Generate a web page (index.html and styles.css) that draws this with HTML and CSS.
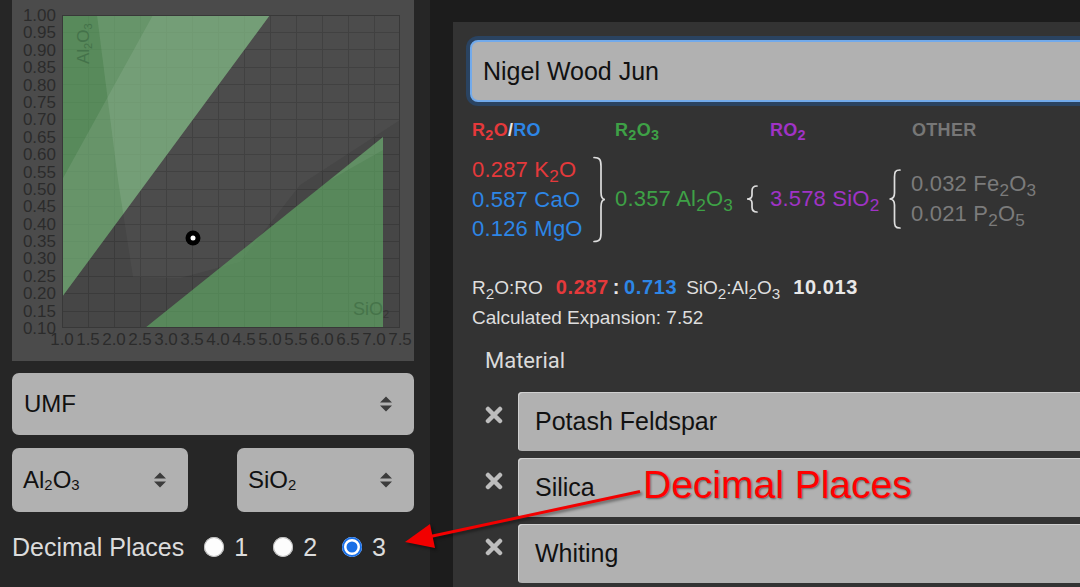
FILE: index.html
```html
<!DOCTYPE html>
<html>
<head>
<meta charset="utf-8">
<link rel="stylesheet" href="styles.css">
</head>
<body>
<div class="app">
  <aside class="left">
    <div class="chart">
      <svg class="plot" width="402" height="361" viewBox="12 0 402 361">
        <rect x="62" y="15" width="338" height="313" fill="#464646"/>
        <path class="grid" d="M88.5 15V328M114.5 15V328M140.5 15V328M166.5 15V328M192.5 15V328M218.5 15V328M244.5 15V328M270.5 15V328M296.5 15V328M322.5 15V328M348.5 15V328M374.5 15V328M62 32.5H400M62 49.5H400M62 67.5H400M62 84.5H400M62 102.5H400M62 119.5H400M62 137.5H400M62 154.5H400M62 171.5H400M62 189.5H400M62 206.5H400M62 224.5H400M62 241.5H400M62 258.5H400M62 276.5H400M62 293.5H400M62 311.5H400"/>
        <polygon points="97,15 400,15 400,120 300,185 240,262 180,278 133,277 118,180" fill="rgba(255,255,255,0.035)"/>
        <polygon points="62,15 270,15 62,297" fill="rgba(100,180,105,0.62)"/>
        <polygon points="97,15 270,15 123.3,213.9 118,180" fill="rgba(255,255,255,0.08)"/>
        <polygon points="153,15 270,15 62,297 62,180" fill="rgba(255,255,255,0.09)"/>
        <polygon points="145,328 383,137 383,328" fill="rgba(100,180,105,0.6)"/>
        <polygon points="330,180 383,137 383,150" fill="rgba(255,255,255,0.06)"/>
        <rect x="62.5" y="15.5" width="337" height="312" fill="none" stroke="#383838"/>
        <text class="axis-name" transform="translate(89,64) rotate(-90)">Al<tspan class="tsub" dy="3">2</tspan><tspan dy="-3">O</tspan><tspan class="tsub" dy="3">3</tspan></text>
        <text class="axis-name si" x="353" y="315">SiO<tspan class="tsub dark" dy="3">2</tspan></text>
        <g class="ylab">
          <text x="56" y="21">1.00</text>
          <text x="56" y="38.4">0.95</text>
          <text x="56" y="55.8">0.90</text>
          <text x="56" y="73.2">0.85</text>
          <text x="56" y="90.6">0.80</text>
          <text x="56" y="107.9">0.75</text>
          <text x="56" y="125.3">0.70</text>
          <text x="56" y="142.7">0.65</text>
          <text x="56" y="160.1">0.60</text>
          <text x="56" y="177.5">0.55</text>
          <text x="56" y="194.9">0.50</text>
          <text x="56" y="212.3">0.45</text>
          <text x="56" y="229.7">0.40</text>
          <text x="56" y="247.1">0.35</text>
          <text x="56" y="264.4">0.30</text>
          <text x="56" y="281.8">0.25</text>
          <text x="56" y="299.2">0.20</text>
          <text x="56" y="316.6">0.15</text>
          <text x="56" y="333.5">0.10</text>
        </g>
        <g class="xlab">
          <text x="62" y="345">1.0</text>
          <text x="88" y="345">1.5</text>
          <text x="114" y="345">2.0</text>
          <text x="140" y="345">2.5</text>
          <text x="166" y="345">3.0</text>
          <text x="192" y="345">3.5</text>
          <text x="218" y="345">4.0</text>
          <text x="244" y="345">4.5</text>
          <text x="270" y="345">5.0</text>
          <text x="296" y="345">5.5</text>
          <text x="322" y="345">6.0</text>
          <text x="348" y="345">6.5</text>
          <text x="374" y="345">7.0</text>
          <text x="400" y="345">7.5</text>
        </g>
        <circle cx="193" cy="238" r="7.5" fill="#000"/>
        <circle cx="193" cy="238" r="2.5" fill="#fff"/>
      </svg>
    </div>

    <div class="select wide">
      <span>UMF</span>
      <svg class="updown" viewBox="0 0 12 16"><path d="M0 6.5L6 0.5L12 6.5Z M0 9.5L6 15.5L12 9.5Z"/></svg>
    </div>
    <div class="select-row">
      <div class="select half">
        <span>Al<span class="ssub">2</span>O<span class="ssub">3</span></span>
        <svg class="updown" viewBox="0 0 12 16"><path d="M0 6.5L6 0.5L12 6.5Z M0 9.5L6 15.5L12 9.5Z"/></svg>
      </div>
      <div class="select half">
        <span>SiO<span class="ssub">2</span></span>
        <svg class="updown" viewBox="0 0 12 16"><path d="M0 6.5L6 0.5L12 6.5Z M0 9.5L6 15.5L12 9.5Z"/></svg>
      </div>
    </div>
    <div class="decimal">
      <span class="dp-label">Decimal Places</span>
      <span class="opt"><span class="radio"></span>1</span>
      <span class="opt"><span class="radio"></span>2</span>
      <span class="opt"><span class="radio checked"></span>3</span>
    </div>
  </aside>

  <main class="right">
    <section class="panel">
      <div class="name-input">Nigel Wood Jun</div>

      <div class="heads">
        <span class="h h1"><span class="red">R<span class="hsub">2</span>O</span><span class="white">/</span><span class="blue">RO</span></span>
        <span class="h h2 green">R<span class="hsub">2</span>O<span class="hsub">3</span></span>
        <span class="h h3 purple">RO<span class="hsub">2</span></span>
        <span class="h h4 grey">OTHER</span>
      </div>

      <div class="oxides">
        <div class="col c1">
          <div class="red">0.287 K<span class="osub">2</span>O</div>
          <div class="blue">0.587 CaO</div>
          <div class="blue">0.126 MgO</div>
        </div>
        <svg class="brace b1" width="14" height="87" viewBox="0 0 14 87"><path d="M2 1.5C8 1.5 9 4 9 10V36C9 41 10 43.5 13 43.5C10 43.5 9 46 9 51V77C9 83 8 85.5 2 85.5"/></svg>
        <div class="col c2 green">0.357 Al<span class="osub">2</span>O<span class="osub">3</span></div>
        <svg class="brace b2" width="14" height="28" viewBox="0 0 14 28"><path d="M12 1C8 1 7 3 7 6V10C7 12.5 5.5 14 2 14C5.5 14 7 15.5 7 18V22C7 25 8 27 12 27"/></svg>
        <div class="col c3 purple">3.578 SiO<span class="osub">2</span></div>
        <svg class="brace b3" width="14" height="60" viewBox="0 0 14 60"><path d="M12 1C7 1 6.5 3.5 6.5 8V24C6.5 27.5 5 30 1.5 30C5 30 6.5 32.5 6.5 36V52C6.5 56.5 7 59 12 59"/></svg>
        <div class="col c4 greytext">
          <div>0.032 Fe<span class="osub">2</span>O<span class="osub">3</span></div>
          <div>0.021 P<span class="osub">2</span>O<span class="osub">5</span></div>
        </div>
      </div>

      <div class="ratio">
        <span>R<span class="rsub">2</span>O:RO</span>
        <b class="red r-a">0.287</b>
        <b class="white r-colon">:</b>
        <b class="blue r-b">0.713</b>
        <span class="r-si">SiO<span class="rsub">2</span>:Al<span class="rsub">2</span>O<span class="rsub">3</span></span>
        <b class="white r-val">10.013</b>
      </div>
      <div class="expansion">Calculated Expansion: 7.52</div>

      <div class="material-h">Material</div>

      <div class="mat-row first">
        <svg class="x-icon" viewBox="0 0 18 18"><path d="M3 3L15 15M15 3L3 15"/></svg>
        <div class="mat-box">Potash Feldspar</div>
      </div>
      <div class="mat-row">
        <svg class="x-icon" viewBox="0 0 18 18"><path d="M3 3L15 15M15 3L3 15"/></svg>
        <div class="mat-box">Silica</div>
      </div>
      <div class="mat-row">
        <svg class="x-icon" viewBox="0 0 18 18"><path d="M3 3L15 15M15 3L3 15"/></svg>
        <div class="mat-box">Whiting</div>
      </div>
    </section>
  </main>
</div>

<svg class="annot-arrow" width="1080" height="587" viewBox="0 0 1080 587">
  <line x1="640" y1="491.5" x2="428" y2="537" />
  <polygon points="405,542 430,524 435,548" />
</svg>
<div class="annot-text">Decimal Places</div>
</body>
</html>
```

FILE: styles.css
```css
* { box-sizing: border-box; }

html, body {
  margin: 0;
  padding: 0;
}

body {
  width: 1080px;
  height: 587px;
  overflow: hidden;
  position: relative;
  background: #1c1c1c;
  font-family: "Liberation Sans", Arial, sans-serif;
}

.app {
  display: flex;
  height: 587px;
}

/* ---------- left column ---------- */
.left {
  width: 430px;
  flex: none;
  background: #262626;
  padding: 0 16px 0 12px;
}

.chart {
  height: 361px;
  background: #4b4b4b;
}

.plot { display: block; }

.grid {
  stroke: #3b3b3b;
  stroke-width: 1;
  fill: none;
  shape-rendering: crispEdges;
}

.plot text {
  font-family: "Liberation Sans", Arial, sans-serif;
  font-size: 17px;
  fill: #2b2b2b;
}

.ylab text { text-anchor: end; }
.xlab text { text-anchor: middle; }

.plot .axis-name {
  font-size: 17px;
  fill: #44724a;
}

.plot .axis-name.si {
  font-size: 18px;
  fill: #46744a;
}

.plot .tsub { font-size: 11px; }
.plot .tsub.dark { fill: #353535; }

.select {
  background: #b1b1b1;
  border-radius: 7px;
  display: flex;
  align-items: center;
  justify-content: space-between;
  padding: 0 22px 0 12px;
  color: #111;
  font-size: 24px;
}

.select.wide {
  margin-top: 12px;
  height: 62px;
}

.select-row {
  display: flex;
  justify-content: space-between;
  margin-top: 13px;
}

.select.half {
  width: 176px;
  height: 64px;
  padding-left: 11px;
}

.select-row .half:last-child { width: 177px; }

.ssub {
  font-size: 0.62em;
  vertical-align: -0.12em;
}

.updown {
  width: 12px;
  height: 16px;
  display: block;
  fill: #3c3c3c;
}

.decimal {
  margin-top: 15px;
  height: 40px;
  display: flex;
  align-items: center;
  color: #dcdcdc;
  font-size: 25px;
}

.dp-label { margin-right: 20px; }

.opt {
  display: flex;
  align-items: center;
  gap: 10px;
  margin-right: 25px;
}

.radio {
  width: 20px;
  height: 20px;
  border-radius: 50%;
  background: #fdfdfd;
  box-shadow: inset 0 0 0 1px #bbb;
}

.radio.checked {
  background: #1a6fe6;
  box-shadow: inset 0 0 0 2px #1a6fe6, inset 0 0 0 4.5px #fff;
}

/* ---------- right ---------- */
.right {
  flex: 1;
  padding: 22px 0 0 23px;
  overflow: hidden;
}

.panel {
  width: 700px;
  height: 600px;
  background: #333333;
  padding: 18px 0 0 17px;
}

.name-input {
  width: 680px;
  height: 62px;
  background: #b1b1b1;
  border: 2px solid #72aaeb;
  border-radius: 8px;
  box-shadow: 0 0 0 4px #2a4361;
  font-size: 25px;
  color: #111;
  display: flex;
  align-items: center;
  padding-left: 11px;
}

.red { color: #e5393b; }
.blue { color: #2d86e6; }
.green { color: #3ea146; }
.purple { color: #a033c6; }
.grey { color: #777; }
.white { color: #e8e8e8; }
.greytext { color: #7b7b7b; }

.heads {
  margin-top: 18px;
  height: 20px;
  line-height: 20px;
  display: flex;
  font-size: 18px;
  font-weight: bold;
  letter-spacing: 0.3px;
  padding-left: 2px;
}

.h1 { width: 143px; }
.h2 { width: 155px; }
.h3 { width: 142px; }

.hsub {
  font-size: 0.8em;
  vertical-align: -0.3em;
  line-height: 1;
}

.oxides {
  margin-top: 15px;
  display: flex;
  align-items: center;
  padding-left: 2px;
  font-size: 22px;
  letter-spacing: 0.2px;
}

.col { line-height: 29px; }
.c1 { width: 120px; }
.c2 { width: 130px; }
.c3 { width: 118px; }
.c4 { line-height: 30px; }

.osub {
  font-size: 0.78em;
  vertical-align: -0.3em;
  line-height: 1;
}

.brace path {
  fill: none;
  stroke: #dedede;
  stroke-width: 1.7;
  stroke-linecap: round;
}

.b1 { margin-right: 9px; }
.b2 { margin-right: 11px; }
.b3 { margin-right: 9px; }

.ratio {
  margin-top: 32px;
  height: 24px;
  line-height: 24px;
  font-size: 19px;
  color: #dedede;
  padding-left: 2px;
  display: flex;
  align-items: baseline;
}

.ratio b {
  font-weight: bold;
  font-size: 20px;
  letter-spacing: 0.6px;
}

.r-a { margin-left: 13px; }
.r-colon { margin-left: 4px; }
.r-b { margin-left: 4px; }
.r-si { margin-left: 9px; }
.r-val { margin-left: 13px; }

.rsub {
  font-size: 0.8em;
  vertical-align: -0.3em;
  line-height: 1;
}

.expansion {
  margin-top: 7px;
  height: 24px;
  line-height: 24px;
  font-size: 19px;
  color: #dedede;
  padding-left: 2px;
}

.material-h {
  margin-top: 17px;
  height: 28px;
  line-height: 28px;
  font-family: Roboto, "Liberation Sans", sans-serif;
  font-size: 22px;
  color: #dadada;
  padding-left: 15px;
}

.mat-row {
  display: flex;
  align-items: flex-start;
  margin-top: 7px;
}

.mat-row.first { margin-top: 17px; }

.x-icon {
  width: 18px;
  height: 18px;
  margin: 14px 15px 0 15px;
  flex: none;
}

.x-icon path {
  stroke: #bdbdbd;
  stroke-width: 4.5;
  stroke-linecap: round;
  fill: none;
}

.mat-box {
  width: 650px;
  height: 59px;
  background: #b1b1b1;
  border-radius: 4px;
  box-shadow: inset 1px 1px 0 #d0d0d0;
  padding-left: 17px;
  font-size: 25px;
  color: #111;
  display: flex;
  align-items: center;
}

/* ---------- annotation overlay ---------- */
.annot-arrow {
  position: absolute;
  left: 0;
  top: 0;
  pointer-events: none;
  filter: drop-shadow(2px 2px 1.5px rgba(0, 0, 0, 0.45));
}

.annot-arrow line {
  stroke: #f20000;
  stroke-width: 3;
}

.annot-arrow polygon { fill: #f20000; }

.annot-text {
  position: absolute;
  left: 643px;
  top: 463px;
  font-size: 39px;
  line-height: 44px;
  color: #ff0000;
  text-shadow: 1px 1px 2px rgba(0, 0, 0, 0.45);
  white-space: nowrap;
}
```
